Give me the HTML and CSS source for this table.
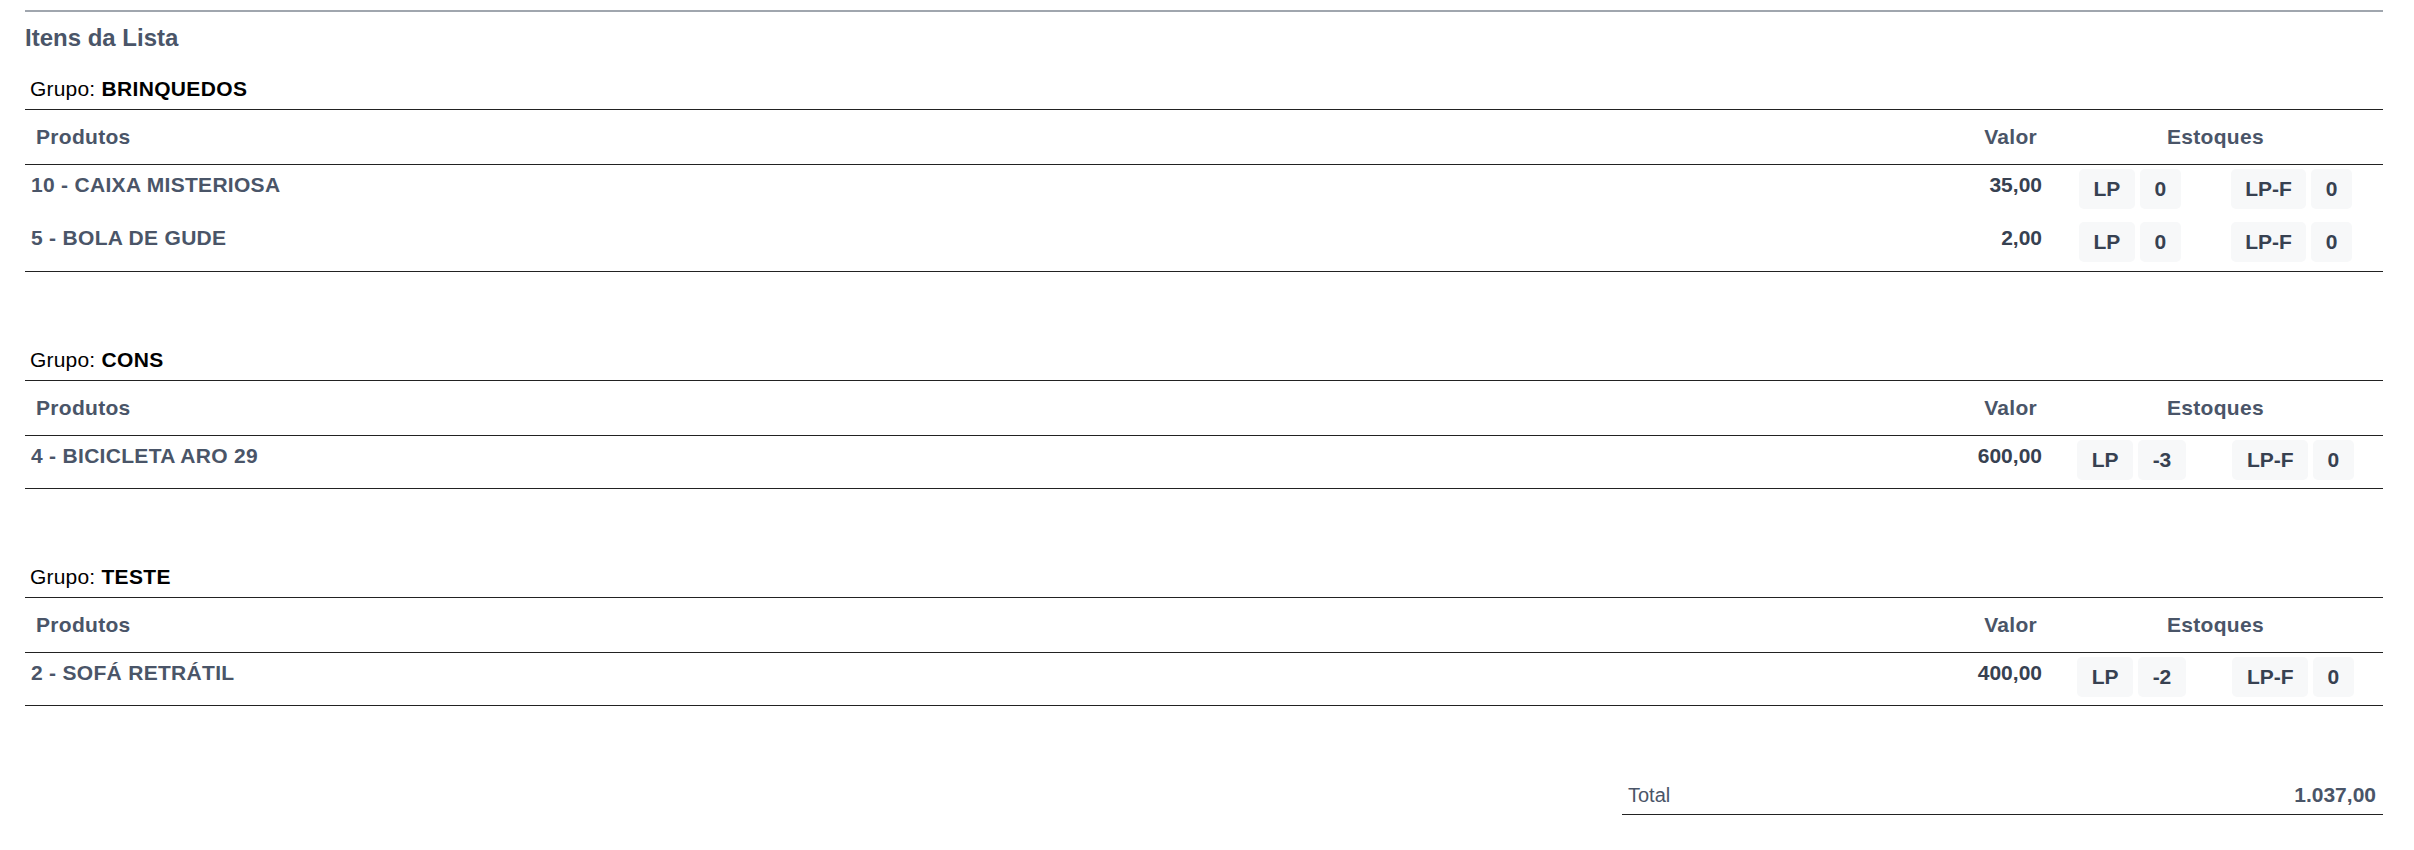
FILE: index.html
```html
<!DOCTYPE html>
<html lang="pt-BR">
<head>
<meta charset="utf-8">
<title>Itens da Lista</title>
<link rel="stylesheet" href="styles.css">
</head>
<body>
<div class="page">
  <div class="top-rule"></div>
  <h2 class="title">Itens da Lista</h2>

  <section class="group">
    <div class="group-label">Grupo: <b>BRINQUEDOS</b></div>
    <div class="row head">
      <div class="c-name">Produtos</div>
      <div class="c-value">Valor</div>
      <div class="c-stock">Estoques</div>
    </div>
    <div class="body">
      <div class="row item">
        <div class="c-name">10 - CAIXA MISTERIOSA</div>
        <div class="c-value">35,00</div>
        <div class="c-stock">
          <span class="stock"><span class="badge">LP</span><span class="badge">0</span></span>
          <span class="stock"><span class="badge">LP-F</span><span class="badge">0</span></span>
        </div>
      </div>
      <div class="row item">
        <div class="c-name">5 - BOLA DE GUDE</div>
        <div class="c-value">2,00</div>
        <div class="c-stock">
          <span class="stock"><span class="badge">LP</span><span class="badge">0</span></span>
          <span class="stock"><span class="badge">LP-F</span><span class="badge">0</span></span>
        </div>
      </div>
    </div>
  </section>

  <section class="group">
    <div class="group-label">Grupo: <b>CONS</b></div>
    <div class="row head">
      <div class="c-name">Produtos</div>
      <div class="c-value">Valor</div>
      <div class="c-stock">Estoques</div>
    </div>
    <div class="body">
      <div class="row item">
        <div class="c-name">4 - BICICLETA ARO 29</div>
        <div class="c-value">600,00</div>
        <div class="c-stock">
          <span class="stock"><span class="badge">LP</span><span class="badge">-3</span></span>
          <span class="stock"><span class="badge">LP-F</span><span class="badge">0</span></span>
        </div>
      </div>
    </div>
  </section>

  <section class="group">
    <div class="group-label">Grupo: <b>TESTE</b></div>
    <div class="row head">
      <div class="c-name">Produtos</div>
      <div class="c-value">Valor</div>
      <div class="c-stock">Estoques</div>
    </div>
    <div class="body">
      <div class="row item">
        <div class="c-name">2 - SOFÁ RETRÁTIL</div>
        <div class="c-value">400,00</div>
        <div class="c-stock">
          <span class="stock"><span class="badge">LP</span><span class="badge">-2</span></span>
          <span class="stock"><span class="badge">LP-F</span><span class="badge">0</span></span>
        </div>
      </div>
    </div>
  </section>

  <div class="total-wrap">
    <div class="total">
      <span class="total-label">Total</span>
      <span class="total-value">1.037,00</span>
    </div>
  </div>
</div>
</body>
</html>
```

FILE: styles.css
```css
html, body {
  margin: 0;
  padding: 0;
  background: #ffffff;
}

body {
  font-family: "Liberation Sans", Arial, Helvetica, sans-serif;
  color: #4a5568;
}

.page {
  padding: 10px 31px 0 25px;
}

.top-rule {
  height: 0;
  border-top: 2px solid #a0a6ae;
}

.title {
  margin: 12px 0 0;
  font-size: 24px;
  line-height: 28px;
  font-weight: bold;
  color: #4a5568;
}

.group {
  margin-top: 25px;
}

.group + .group {
  margin-top: 76px;
}

.group-label {
  font-size: 21px;
  line-height: 24px;
  color: #000;
  padding: 0 5px 8px;
  letter-spacing: 0.2px;
  border-bottom: 1px solid #222;
}

.group-label b {
  font-weight: bold;
  letter-spacing: 0.35px;
}

.row {
  display: grid;
  grid-template-columns: 1fr 160px 335px;
}

.head {
  font-size: 21px;
  line-height: 24px;
  font-weight: bold;
  letter-spacing: 0.3px;
  color: #4a5568;
  border-bottom: 1px solid #222;
}

.head > div {
  padding: 15px 11px;
}

.head .c-value {
  text-align: right;
}

.head .c-stock {
  text-align: center;
}

.body {
  border-bottom: 1px solid #222;
}

.item {
  font-size: 21px;
  line-height: 24px;
  font-weight: bold;
}

.item .c-name {
  padding: 8px 6px 0;
  color: #4a5568;
  letter-spacing: 0.3px;
}

.item .c-value {
  padding: 8px 6px 0;
  text-align: right;
  color: #374151;
}

.item .c-stock {
  padding: 4px 6px 9px;
  display: flex;
  justify-content: space-around;
  align-items: flex-start;
}

.item:only-child .c-stock {
  padding-bottom: 8px;
}

.stock {
  display: inline-flex;
  gap: 5px;
}

.badge {
  display: inline-block;
  height: 40px;
  line-height: 40px;
  padding: 0 14.5px;
  background: #f7f8f9;
  border-radius: 5px;
  color: #374151;
  font-size: 21px;
  font-weight: bold;
}

.total-wrap {
  display: flex;
  justify-content: flex-end;
  margin-top: 77px;
}

.total {
  width: 761px;
  display: flex;
  justify-content: space-between;
  align-items: baseline;
  padding: 0 7px 7px 6px;
  border-bottom: 1px solid #222;
  box-sizing: border-box;
  line-height: 24px;
}

.total-label {
  font-size: 20px;
  color: #4a5568;
}

.total-value {
  font-size: 21px;
  font-weight: bold;
  color: #4a5568;
}
```
